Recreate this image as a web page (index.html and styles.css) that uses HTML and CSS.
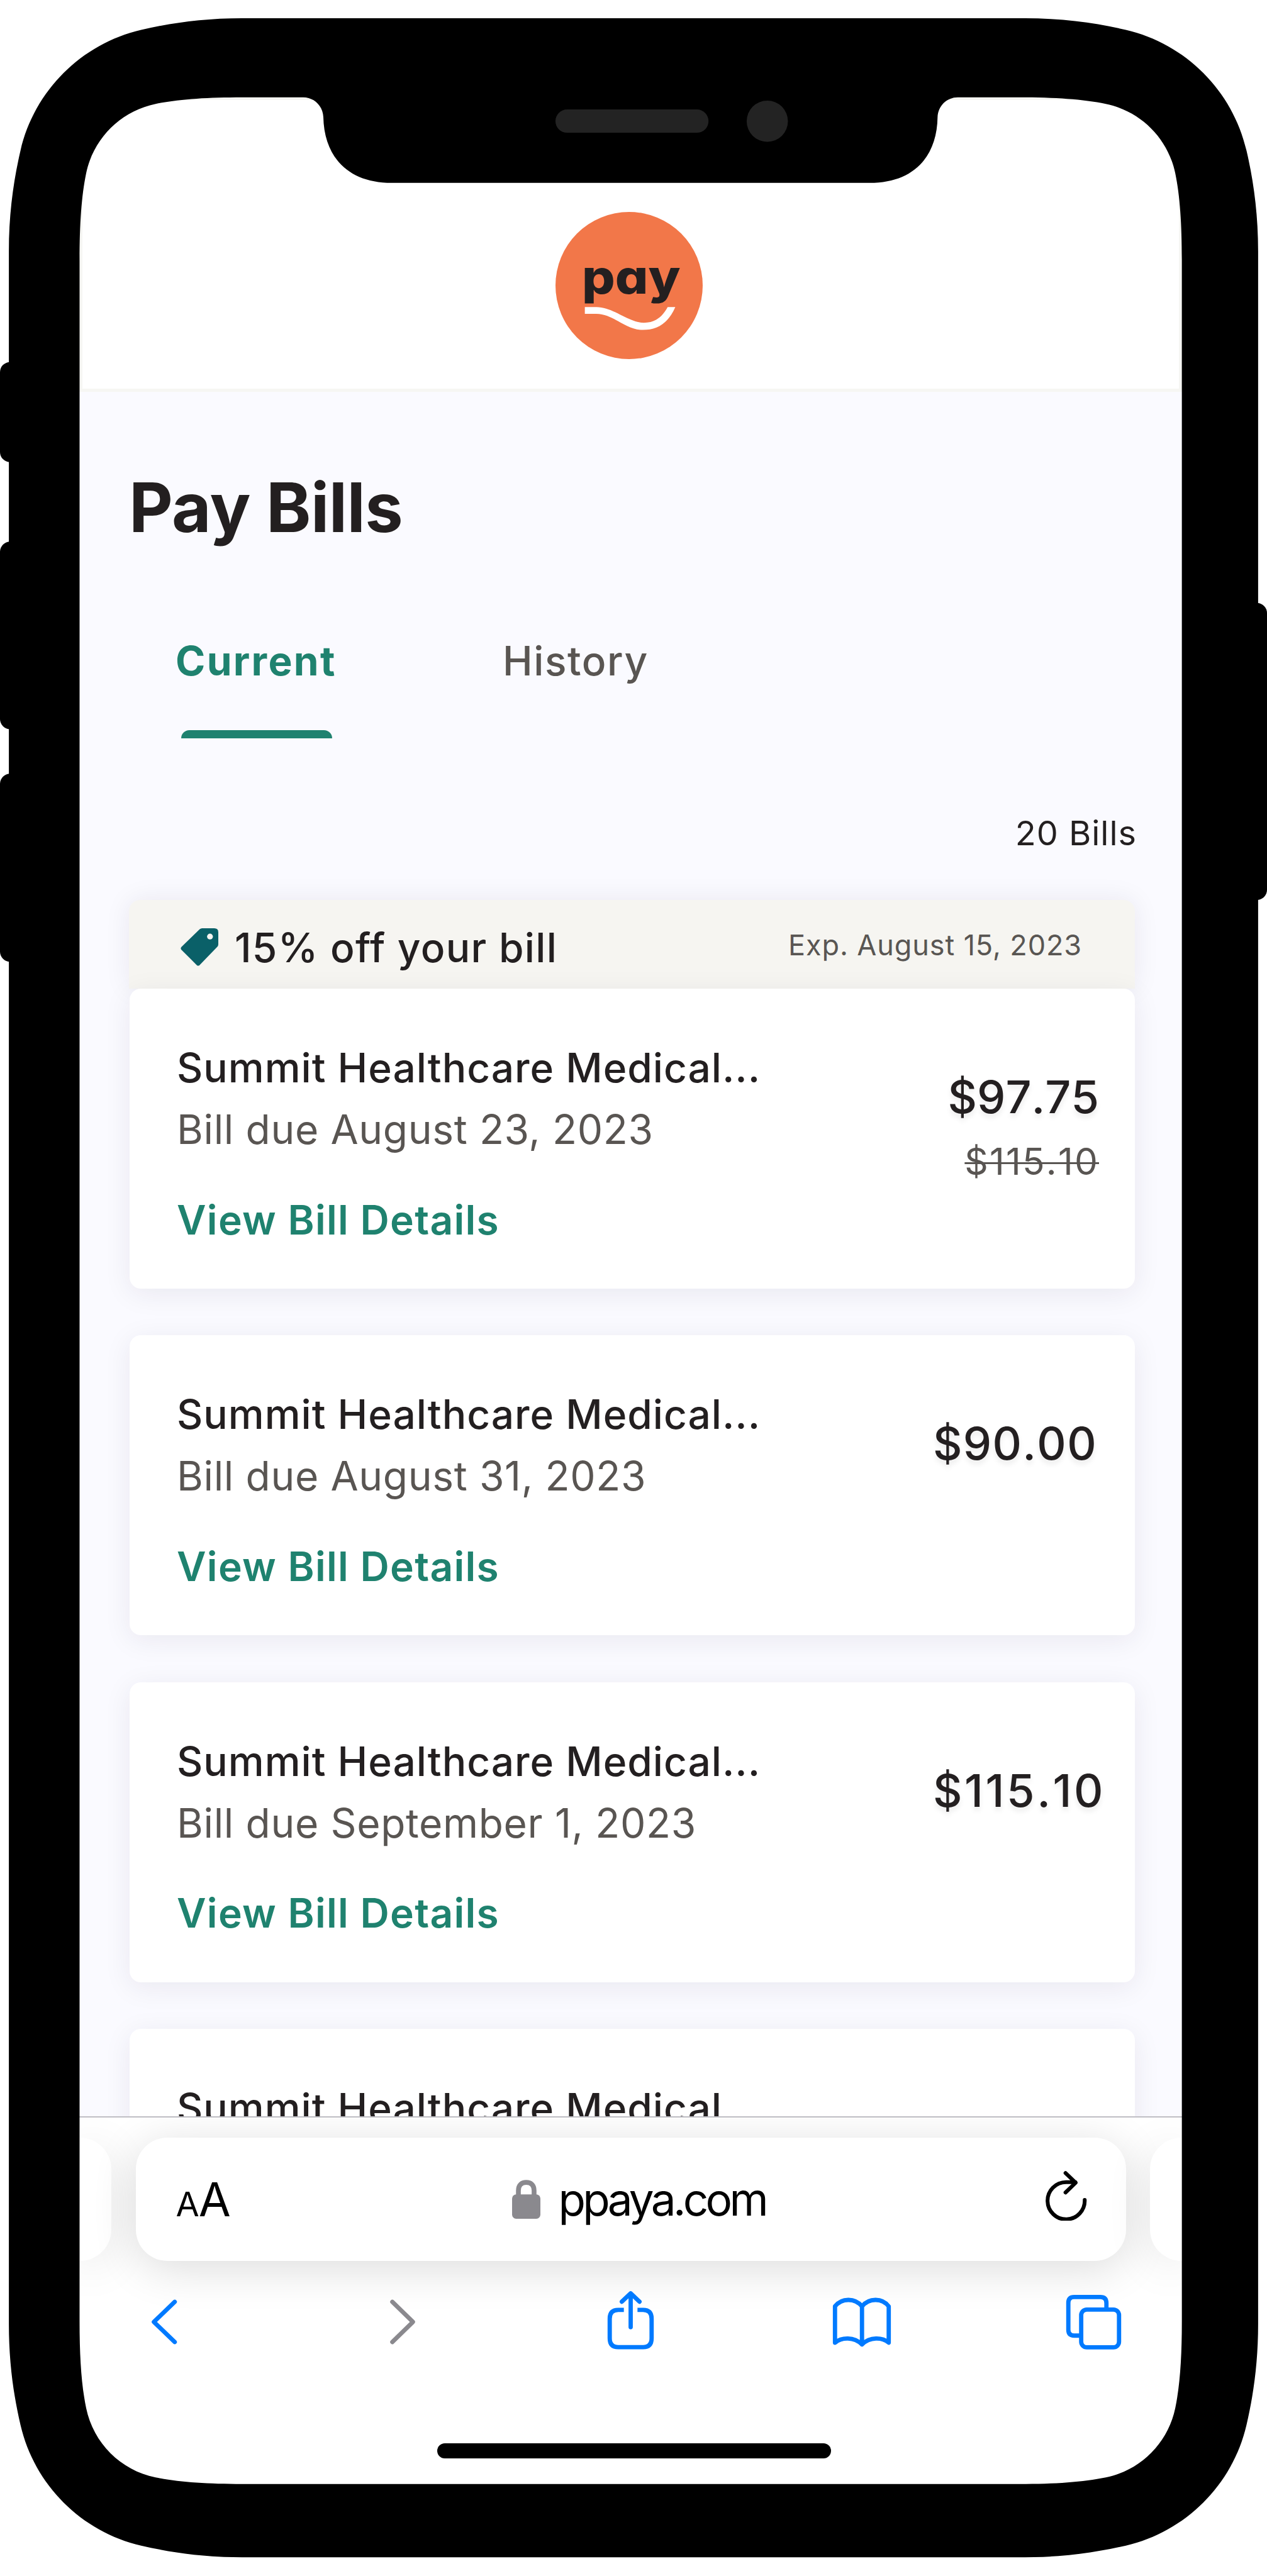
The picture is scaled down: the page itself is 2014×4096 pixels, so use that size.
FILE: index.html
```html
<!DOCTYPE html>
<html lang="en">
<head>
    <meta charset="UTF-8">
    <meta name="viewport" content="width=device-width, initial-scale=1.0">
    <title>Pay Bills</title>
    <link rel="stylesheet" href="styles.css">
</head>
<body>
    <div class="phone">
        <div class="screen">
            <header class="site-header">
                <svg class="logo" viewBox="0 0 290 290">
                    <circle cx="145" cy="145" r="145" fill="#f27749"/>
                    <text class="logo-text" x="52" y="161" textLength="194" lengthAdjust="spacingAndGlyphs">pay</text>
                    <path fill="#fff" d="M57.800 187.500H80.500C114 187.500 144 218.300 174 218.300C194 218.300 209 209.500 221 187.500H236C222 220 200 232.500 172 232.500C137 232.500 114 200.800 80.500 200.800H57.800Z"/>
                </svg>
            </header>

            <main class="content">
                <h1 class="page-title">Pay Bills</h1>
                <nav class="tabs">
                    <a class="tab active">Current</a>
                    <a class="tab">History</a>
                </nav>
                <p class="bill-count">20 Bills</p>

                <div class="promo">
                    <svg class="tag-icon" viewBox="0 0 75 75">
                        <path fill="#0a6068" d="M38 2Q40 0 43 0H67Q75 0 75 8V32Q75 35 73 37L38 73Q35 76 32 73L2 43Q-1 40 2 37Z"/>
                        <circle cx="58.500" cy="16.500" r="5.800" fill="#f6f5f1"/>
                    </svg>
                    <span class="promo-text">15% off your bill</span>
                    <span class="promo-exp">Exp. August 15, 2023</span>
                </div>
                <div class="bill">
                    <div class="bill-info">
                        <div class="bill-name">Summit Healthcare Medical...</div>
                        <div class="bill-due">Bill due August 23, 2023</div>
                        <a class="bill-link">View Bill Details</a>
                    </div>
                    <div class="bill-price discounted">
                        <div class="price">$97.75</div>
                        <div class="old-price">$115.10</div>
                    </div>
                </div>
                <div class="bill">
                    <div class="bill-info">
                        <div class="bill-name">Summit Healthcare Medical...</div>
                        <div class="bill-due">Bill due August 31, 2023</div>
                        <a class="bill-link">View Bill Details</a>
                    </div>
                    <div class="bill-price">
                        <div class="price">$90.00</div>
                    </div>
                </div>
                <div class="bill">
                    <div class="bill-info">
                        <div class="bill-name">Summit Healthcare Medical...</div>
                        <div class="bill-due">Bill due September 1, 2023</div>
                        <a class="bill-link">View Bill Details</a>
                    </div>
                    <div class="bill-price">
                        <div class="price loose">$115.10</div>
                    </div>
                </div>
                <div class="bill">
                    <div class="bill-info">
                        <div class="bill-name">Summit Healthcare Medical</div>
                    </div>
                </div>
            </main>

            <footer class="browser-bar">
                <div class="address-row">
                    <div class="side-tab left"></div>
                    <div class="address">
                        <span class="text-size"><small>A</small>A</span>
                        <span class="domain">
                            <svg class="lock-icon" viewBox="0 0 56 77">
                                <path fill="none" stroke="#8a898e" stroke-width="9.500" d="M12.500 34V21C12.500 10 19 5 28 5S43.500 10 43.500 21V34"/>
                                <rect y="29" width="56" height="48" rx="8" fill="#8a898e"/>
                            </svg>
                            <span class="domain-name">ppaya.com</span>
                        </span>
                        <svg class="reload-icon" viewBox="2063 4284 82 98">
                            <path class="stroke" d="M2140.300 4341A36.700 36.700 0 1 1 2103.500 4306H2122M2102.400 4288L2122.500 4307L2102.400 4326.500"/>
                        </svg>
                    </div>
                    <div class="side-tab right"></div>
                </div>
                <div class="toolbar">
                    <svg class="icon-back" viewBox="299 4539 50 89">
                        <path class="stroke" d="M345 4543.500L303.500 4583.500L345 4623.500"/>
                    </svg>
                    <svg class="icon-forward" viewBox="769 4539 50 89">
                        <path class="stroke muted" d="M773.500 4543.500L814.500 4583.500L773.500 4623.500"/>
                    </svg>
                    <svg class="icon-share" viewBox="1199 4521 91 115">
                        <path class="stroke" d="M1227 4541.500L1244.500 4525L1262 4541.500M1244.500 4526V4592"/>
                        <path class="stroke butt" d="M1231 4557.800H1220Q1203 4557.800 1203 4575V4614Q1203 4631.700 1220 4631.700H1269Q1286 4631.700 1286 4614V4575Q1286 4557.800 1269 4557.800H1258"/>
                    </svg>
                    <svg class="icon-book" viewBox="1643.500 4535.500 114.500 96">
                        <path class="stroke" d="M1701 4627.500V4552M1701 4552C1687 4535 1661 4535 1647.500 4552V4624C1661 4613 1685 4612 1701 4627.500C1717 4612 1741 4613 1754 4624V4552C1741 4535 1715 4535 1701 4552"/>
                    </svg>
                    <svg class="icon-tabs" viewBox="2103.500 4529 108.500 108">
                        <path class="stroke butt" d="M2131 4609.500H2119Q2107.500 4609.500 2107.500 4598V4544.500Q2107.500 4533 2119 4533H2171Q2183 4533 2183 4545V4556"/>
                        <rect class="stroke" x="2133" y="4557.800" width="75" height="75" rx="11"/>
                    </svg>
                </div>
                <div class="home-indicator"></div>
            </footer>
        </div>

        <!-- phone body, drawn over the screen -->
        <svg class="bezel" viewBox="0 0 2500 5084" preserveAspectRatio="none">
            <rect x="0" y="714.500" width="80" height="197.500" rx="20"/>
            <rect x="0" y="1069" width="80" height="370" rx="20"/>
            <rect x="0" y="1527" width="80" height="371" rx="20"/>
            <rect x="2420" y="1190" width="80" height="586" rx="20"/>
            <path fill-rule="evenodd" d="M477.500 36H2022.500c75 0 140 9.200 199 23c118 27.500 210.500 120 238 238c13.800 59 23 124 23 199V4587c0 75-9.200 140-23 199c-27.500 118-120 210.500-238 238c-59 13.800-124 23-199 23H477.500c-75 0-140-9.200-199-23c-118-27.500-210.500-120-238-238c-13.800-59-23-124-23-199V496c0-75 9.200-140 23-199c27.500-118 120-210.500 238-238c59-13.800 124-23 199-23Z
                M478 192H598c22 0 39 17 40 39c1.500 78 48 130 135 130H1716c87 0 133-52 134-130c1-22 18-39 40-39H2011c71 0 126 3.700 171 13c69 14.300 122.700 68 137 137c9.300 45 13 100 13 171V4581.500c0 71-3.700 126-13 171c-14.300 69-68 122.700-137 137c-45 9.300-100 13-171 13H478c-71 0-126-3.700-171-13c-69-14.300-122.700-68-137-137c-9.300-45-13-100-13-171V513c0-71 3.700-126 13-171c14.300-69 68-122.700 137-137c45-9.300 100-13 171-13Z"/>
            <rect x="1096" y="216" width="302" height="46" rx="23" fill="#232323"/>
            <circle cx="1514" cy="239.300" r="40.700" fill="#232323"/>
        </svg>
    </div>
</body>
</html>
```
FILE: styles.css
```css
* {
    box-sizing: border-box;
}
body {
    margin: 0;
    background-color: #fff;
    font-family: Inter, "Liberation Sans", sans-serif;
    color: #231f20;
}
h1, p {
    margin: 0;
}
svg {
    display: block;
    flex-shrink: 0;
}
.phone {
    position: relative;
    width: 2014px;
    height: 4096px;
    padding: 154px 135px 146px 126px;
    overflow: hidden;
}
.bezel {
    position: absolute;
    top: 0;
    left: 0;
    width: 2014px;
    height: 4096px;
}
.screen {
    height: 3796px;
    display: flex;
    flex-direction: column;
    overflow: hidden;
    background-color: #fafaff;
}
.site-header {
    height: 469px;
    flex-shrink: 0;
    display: flex;
    justify-content: center;
    padding: 178px 5px 0 0;
    border: 5px solid #f6f6f3;
    background-color: #fff;
}
.logo {
    width: 234px;
    height: 234px;
}
.logo-text {
    font-size: 92px;
    font-weight: 800;
    font-feature-settings: "cv11";
    fill: #231f20;
}

/* bills list */
.content {
    flex: 1;
    min-height: 0;
    overflow: hidden;
    padding: 119px 75px 0 79px;
}
.page-title {
    font-size: 108px;
    line-height: 130px;
    font-weight: 700;
    letter-spacing: -0.500px;
}
.tabs {
    display: flex;
    margin-top: 139px;
    padding-left: 74px;
    font-size: 64px;
    line-height: 80px;
    letter-spacing: 1.600px;
}
.tab {
    font-weight: 500;
    color: #595552;
}
.tab.active {
    width: 256px;
    margin-right: 264px;
    letter-spacing: 2.300px;
    color: #1f826f;
    font-weight: 700;
}
.tab.active::after {
    content: "";
    display: block;
    height: 13px;
    margin: 70px 7px 0 9px;
    border-radius: 13px 13px 0 0;
    background-color: #1f826f;
}
.bill-count {
    margin-top: 118px;
    margin-right: -3px;
    font-size: 54px;
    line-height: 66px;
    letter-spacing: 1px;
    text-align: right;
}
.promo {
    height: 141px;
    margin: 73px 0 0 0;
    display: flex;
    align-items: center;
    padding: 10px 84px 0 82px;
    border-radius: 18px 18px 0 0;
    background-color: #f6f5f1;
    box-shadow: 0 0 40px rgba(35, 31, 60, 0.08);
}
.tag-icon {
    width: 60px;
    height: 60px;
    margin-bottom: 1px;
}
.promo-text {
    margin-left: 26px;
    font-size: 64px;
    font-weight: 500;
    letter-spacing: 1.300px;
}
.promo-exp {
    margin: 0 0 9px auto;
    font-size: 45px;
    letter-spacing: 0.900px;
    color: #595653;
}
.bill {
    position: relative;
    display: flex;
    justify-content: space-between;
    height: 477px;
    margin: 0 0 74.400px 1px;
    padding: 77px 0 0 75px;
    border-radius: 18px;
    background-color: #fff;
    box-shadow: 0 8px 44px rgba(35, 31, 60, 0.08);
}
.bill-info {
    font-size: 64px;
    line-height: 98px;
    letter-spacing: 1px;
    white-space: nowrap;
}
.bill-name {
    font-weight: 500;
}
.bill-due {
    letter-spacing: 0.650px;
    color: #595552;
}
.bill-link {
    display: block;
    margin-top: 45.500px;
    font-weight: 600;
    letter-spacing: 1.300px;
    color: #1f826f;
}
.bill-price {
    width: 321px;
    padding-top: 51px;
    font-kerning: none;
}
.bill-price.discounted {
    width: auto;
    padding-right: 57px;
    text-align: right;
}
.price {
    font-size: 72px;
    line-height: 88px;
    font-weight: 500;
    letter-spacing: 1.300px;
    text-shadow: 0 6px 8px rgba(0, 0, 0, 0.08);
}
.price.loose {
    letter-spacing: 3.600px;
}
.discounted .price {
    letter-spacing: 0;
}
.old-price {
    margin-top: 23px;
    font-size: 58.500px;
    line-height: 72px;
    letter-spacing: 2.200px;
    color: #595552;
    text-decoration: line-through;
    text-decoration-thickness: 3px;
}

/* browser chrome */
.browser-bar {
    position: relative;
    height: 585px;
    flex-shrink: 0;
    overflow: hidden;
    border-top: 2px solid #bfbec4;
    background-color: #fff;
}
.address-row {
    display: flex;
    justify-content: space-between;
    height: 196px;
    margin-top: 31.500px;
}
.side-tab {
    width: 51px;
    background-color: #fff;
    box-shadow: 0 12px 70px rgba(0, 0, 0, 0.1);
}
.side-tab.left {
    border-radius: 0 50px 50px 0;
}
.side-tab.right {
    border-radius: 50px 0 0 50px;
}
.address {
    width: 1574px;
    display: flex;
    align-items: center;
    padding: 0 62px 0 65px;
    border-radius: 50px;
    background-color: #fff;
    box-shadow: 0 12px 70px rgba(0, 0, 0, 0.14);
    color: #000;
}
.text-size {
    width: 534px;
    margin-left: -1px;
    font-size: 74px;
    letter-spacing: -1px;
}
.text-size small {
    font-size: 54px;
}
.domain {
    display: flex;
    align-items: center;
    gap: 29px;
}
.lock-icon {
    width: 45px;
    height: 62px;
}
.domain-name {
    font-size: 71px;
    letter-spacing: -4.700px;
}
.reload-icon {
    width: 66px;
    height: 79px;
    margin: 0 0 11px auto;
    stroke: #000;
}
.toolbar {
    display: grid;
    grid-template-columns: 378.800px 346.300px 358.200px 370.600px 88px;
    align-items: center;
    height: 94px;
    margin: 48px 0 0 115px;
}
.toolbar svg {
    overflow: visible;
}
.icon-back, .icon-forward {
    width: 40px;
    height: 72px;
}
.icon-share {
    width: 73px;
    height: 93px;
    margin-bottom: 6px;
}
.icon-book {
    width: 92px;
    height: 77px;
}
.icon-tabs {
    width: 87px;
    height: 87px;
}
.stroke {
    fill: none;
    stroke-width: 8.500;
    stroke-linecap: round;
    stroke-linejoin: round;
}
.reload-icon .stroke {
    stroke-width: 7.500;
}
.toolbar .stroke {
    stroke: #007aff;
}
.toolbar .muted {
    stroke: #8a898e;
}
.toolbar .butt {
    stroke-linecap: butt;
}
.home-indicator {
    width: 626px;
    height: 24px;
    margin: 148px 0 0 569px;
    border-radius: 12px;
    background-color: #000;
}
```
